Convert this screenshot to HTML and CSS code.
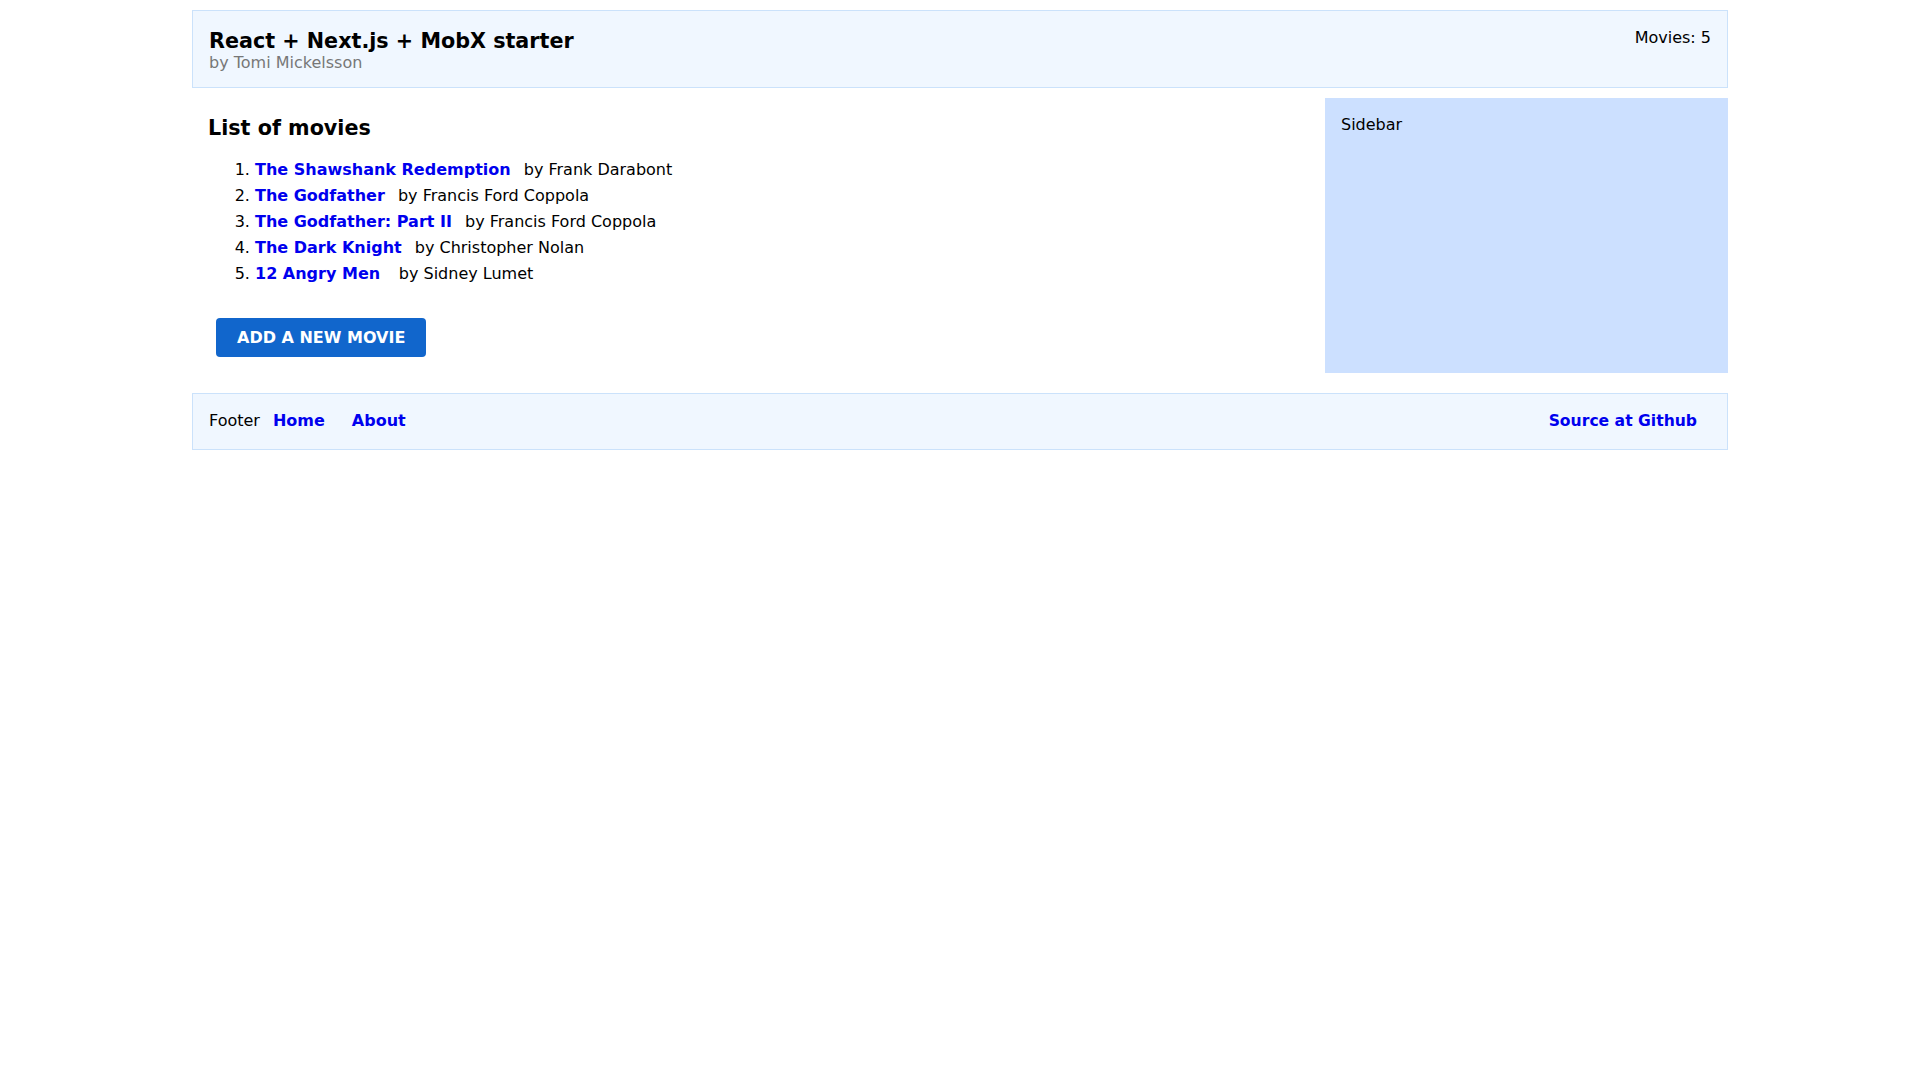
FILE: index.html
```html
<!DOCTYPE html>
<html lang="en">
<head>
<meta charset="utf-8">
<title>React + Next.js + MobX starter</title>
<link rel="stylesheet" href="styles.css">
</head>
<body>
<div class="page">
  <header class="site-header">
    <div class="brand">
      <h1 class="brand-title">React + Next.js + MobX starter</h1>
      <div class="brand-sub">by Tomi Mickelsson</div>
    </div>
    <div class="movie-count">Movies: 5</div>
  </header>

  <div class="content">
    <main class="main">
      <h2 class="section-title">List of movies</h2>
      <ol class="movie-list">
        <li><a href="#" class="movie-link">The Shawshank Redemption</a> <span class="director">by Frank Darabont</span></li>
        <li><a href="#" class="movie-link">The Godfather</a> <span class="director">by Francis Ford Coppola</span></li>
        <li><a href="#" class="movie-link">The Godfather: Part II</a> <span class="director">by Francis Ford Coppola</span></li>
        <li><a href="#" class="movie-link">The Dark Knight</a> <span class="director">by Christopher Nolan</span></li>
        <li><a href="#" class="movie-link">12 Angry Men&nbsp;</a> <span class="director">by Sidney Lumet</span></li>
      </ol>
      <button class="add-button" type="button">ADD A NEW MOVIE</button>
    </main>
    <aside class="sidebar">Sidebar</aside>
  </div>

  <footer class="site-footer">
    <div class="footer-left">
      <span class="footer-label">Footer</span>
      <a href="#" class="footer-link footer-home">Home</a>
      <a href="#" class="footer-link footer-about">About</a>
    </div>
    <a href="#" class="footer-link footer-source">Source at Github</a>
  </footer>
</div>
</body>
</html>
```

FILE: styles.css
```css
* {
  box-sizing: border-box;
}

html, body {
  margin: 0;
  padding: 0;
  background: #ffffff;
}

body {
  font-family: "DejaVu Sans", Verdana, sans-serif;
  font-size: 16px;
  color: #000000;
}

.page {
  width: 1536px;
  margin: 0 auto;
  padding-top: 10px;
}

a {
  color: #0000ee;
  text-decoration: none;
  font-weight: bold;
}

/* Header */
.site-header {
  display: flex;
  justify-content: space-between;
  align-items: flex-start;
  background: #f0f7ff;
  border: 1px solid #cbe2fb;
  padding: 16px;
}

.brand-title {
  margin: 0;
  padding-top: 1px;
  font-size: 20.7px;
  line-height: 26px;
  font-weight: bold;
}

.brand-sub {
  color: #777777;
  font-size: 16px;
  line-height: 17px;
}

.movie-count {
  line-height: 18px;
  padding-top: 2px;
}

/* Content */
.content {
  display: flex;
  margin-top: 10px;
}

.main {
  flex: 1;
  padding: 18px 16px 16px 16px;
}

.section-title {
  margin: 0;
  font-size: 20.7px;
  line-height: 24px;
  font-weight: bold;
}

.movie-list {
  margin: 16.5px 0 0 8px;
  padding-left: 39px;
}

.movie-list li {
  line-height: 26px;
}

.movie-link {
  margin-right: 8px;
}

.add-button {
  display: block;
  margin: 31px 0 0 8px;
  padding: 10px 21px;
  border: none;
  border-radius: 4px;
  background: #1166cc;
  color: #ffffff;
  font-family: "DejaVu Sans", Verdana, sans-serif;
  font-size: 16px;
  font-weight: bold;
  line-height: 19px;
  cursor: pointer;
}

.sidebar {
  width: 403px;
  background: #cce0ff;
  padding: 18px 16px 16px 16px;
  line-height: 18px;
}

/* Footer */
.site-footer {
  display: flex;
  justify-content: space-between;
  align-items: flex-start;
  margin-top: 20px;
  background: #f0f7ff;
  border: 1px solid #cbe2fb;
  padding: 16px;
}

.footer-left {
  display: flex;
  align-items: baseline;
  padding-top: 1px;
  line-height: 19px;
}

.footer-home {
  margin-left: 13px;
}

.footer-about {
  margin-left: 27px;
}

.footer-source {
  display: inline-block;
  padding: 2px 30px 2px 14px;
  margin-right: -16px;
  font-size: 15.6px;
  line-height: 19px;
}
```
